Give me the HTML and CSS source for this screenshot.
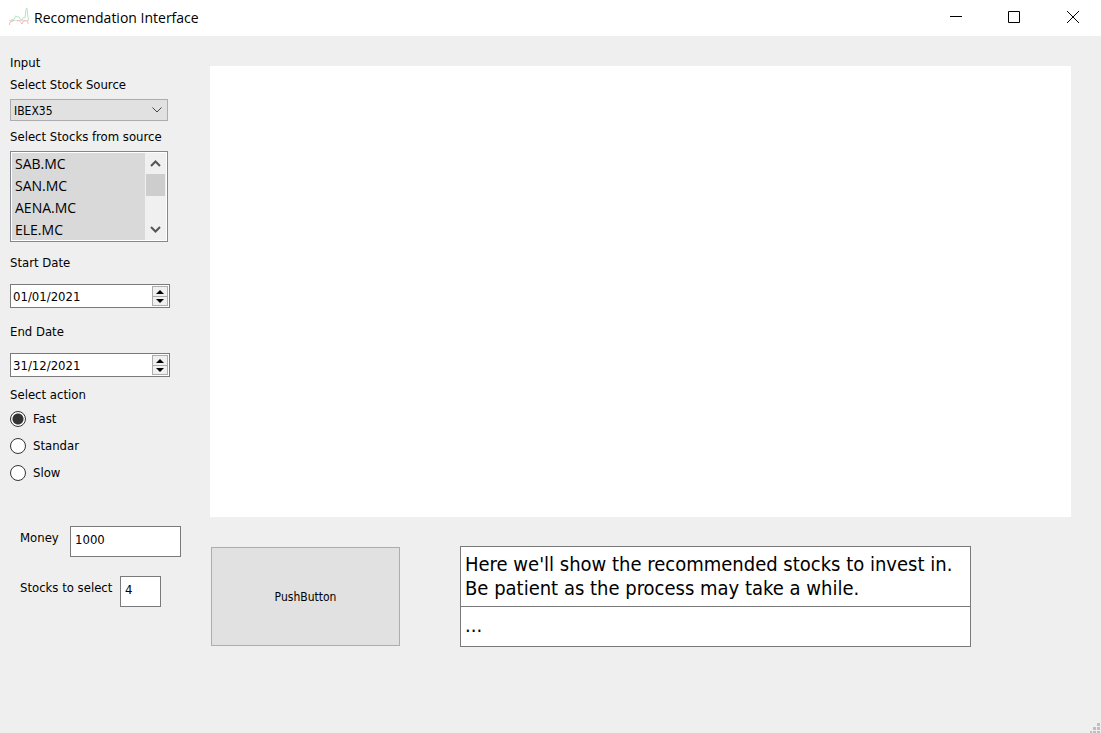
FILE: index.html
```html
<!DOCTYPE html>
<html lang="en">
<head>
<meta charset="utf-8">
<title>Recomendation Interface</title>
<link rel="stylesheet" href="styles.css">
</head>
<body>
<header class="titlebar">
  <svg class="app-icon" width="20" height="20" viewBox="0 0 20 20" fill="none">
    <path d="M0 12.500H20" stroke="#dedede"/>
    <path d="M2 12L5.500 11L6.500 8L8 9L9.500 8.500L11 11L13 12L14.500 9.500L16 10L17 1L18 0L18.500 6L19.500 12" stroke="#b4e6bd"/>
    <path d="M.5 17L1 14L3 13.500L5 12.500M8 13L10 12.500L12 14.500L13 16L14 13.500L17 12.500L19 14V16" stroke="#f7b9b9"/>
  </svg>
  <h1 class="title">Recomendation Interface</h1>
  <div class="window-buttons">
    <button class="window-button" type="button" aria-label="Minimize"><svg width="12" height="12" viewBox="0 0 12 12"><path d="M0 5.500H12" stroke="#000"/></svg></button>
    <button class="window-button" type="button" aria-label="Maximize"><svg width="12" height="12" viewBox="0 0 12 12"><path d="M.5.500H11.500V11.500H.5Z" fill="none" stroke="#000"/></svg></button>
    <button class="window-button" type="button" aria-label="Close"><svg width="14" height="12" viewBox="0 0 14 12"><path d="M2 0L14 12M14 0L2 12" stroke="#000"/></svg></button>
  </div>
</header>
<div class="content">
  <form class="sidebar">
    <h2 class="heading">Input</h2>
    <div class="field">
      <label for="source">Select Stock Source</label>
      <div class="combo">
        <select id="source" class="combo-select"><option>IBEX35</option></select>
        <svg class="combo-arrow" width="10" height="6" viewBox="0 0 10 6"><path d="M.5.500L5 5L9.500.500" fill="none" stroke="#444"/></svg>
      </div>
    </div>
    <div class="field">
      <label for="stocks">Select Stocks from source</label>
      <div class="list">
        <select id="stocks" class="list-select" multiple size="4">
          <option selected>SAB.MC</option>
          <option selected>SAN.MC</option>
          <option selected>AENA.MC</option>
          <option selected>ELE.MC</option>
        </select>
        <div class="scrollbar">
          <button class="scroll-button" type="button" aria-label="Scroll up"><svg width="11" height="7" viewBox="0 0 11 7"><path d="M1 6L5.500 1.500L10 6" fill="none" stroke="#555" stroke-width="2"/></svg></button>
          <div class="scroll-track"><div class="scroll-thumb"></div></div>
          <button class="scroll-button" type="button" aria-label="Scroll down"><svg width="11" height="7" viewBox="0 0 11 7"><path d="M1 1L5.500 5.500L10 1" fill="none" stroke="#555" stroke-width="2"/></svg></button>
        </div>
      </div>
    </div>
    <div class="field date-field">
      <label for="start">Start Date</label>
      <div class="date">
        <input id="start" class="date-input" type="text" value="01/01/2021">
        <div class="spinner">
          <button class="spin" type="button" aria-label="Later start"><svg width="8" height="4" viewBox="0 0 8 4"><path d="M0 4L4 0L8 4Z"/></svg></button>
          <button class="spin" type="button" aria-label="Earlier start"><svg width="8" height="4" viewBox="0 0 8 4"><path d="M0 0L4 4L8 0Z"/></svg></button>
        </div>
      </div>
    </div>
    <div class="field date-field">
      <label for="end">End Date</label>
      <div class="date">
        <input id="end" class="date-input" type="text" value="31/12/2021">
        <div class="spinner">
          <button class="spin" type="button" aria-label="Later end"><svg width="8" height="4" viewBox="0 0 8 4"><path d="M0 4L4 0L8 4Z"/></svg></button>
          <button class="spin" type="button" aria-label="Earlier end"><svg width="8" height="4" viewBox="0 0 8 4"><path d="M0 0L4 4L8 0Z"/></svg></button>
        </div>
      </div>
    </div>
    <fieldset class="actions">
      <legend class="legend">Select action</legend>
      <div class="radios">
        <label class="radio"><input class="radio-input" type="radio" name="action" checked>Fast</label>
        <label class="radio"><input class="radio-input" type="radio" name="action">Standar</label>
        <label class="radio"><input class="radio-input" type="radio" name="action">Slow</label>
      </div>
    </fieldset>
    <div class="amounts">
      <div class="amount">
        <label class="amount-label" for="money">Money</label>
        <textarea id="money" class="box money" rows="1">1000</textarea>
      </div>
      <div class="amount">
        <label class="amount-label" for="count">Stocks to select</label>
        <textarea id="count" class="box count" rows="1">4</textarea>
      </div>
    </div>
  </form>
  <main class="main">
    <div class="chart"></div>
    <div class="bottom">
      <button class="push" type="button">PushButton</button>
      <div class="results">
        <p class="message">Here we'll show the recommended stocks to invest in.<br>Be patient as the process may take a while.</p>
        <p class="message output">...</p>
      </div>
    </div>
  </main>
  <svg class="grip" width="10" height="10" viewBox="0 0 10 10" fill="#bfbfbf"><path d="M7 0h3v3h-3zM3 4h3v3h-3zM7 4h3v3h-3zM0 8h2v2h-2zM3 8h3v2h-3zM7 8h3v2h-3z"/></svg>
</div>
</body>
</html>
```

FILE: styles.css
```css
* {
  box-sizing: border-box;
}

body {
  margin: 0;
  min-height: 100vh;
  display: flex;
  flex-direction: column;
  background: #efefef;
  color: #000;
  font: 13px/18px "DejaVu Sans Condensed", "DejaVu Sans", sans-serif;
}

button,
input,
select,
textarea {
  font: inherit;
  color: inherit;
  margin: 0;
  border-radius: 0;
}

h1,
h2,
p {
  margin: 0;
  font-weight: normal;
}

svg {
  display: block;
}

.titlebar {
  height: 36px;
  flex: none;
  display: flex;
  align-items: center;
  background: #fff;
  padding-left: 9px;
}

.app-icon {
  margin-right: 5px;
}

.title {
  font: 14px/20px "Open Sans", sans-serif;
}

.window-buttons {
  display: flex;
  align-self: stretch;
  margin-left: auto;
}

.window-button {
  width: 58px;
  padding: 0 0 2px;
  border: 0;
  background: none;
  display: grid;
  place-items: center;
}

.content {
  position: relative;
  flex: 1;
  display: flex;
  padding: 0 30px 0 10px;
}

.sidebar {
  width: 171px;
  flex: none;
  padding-top: 18px;
  margin-right: 29px;
}

.heading {
  font-size: 13px;
}

.field {
  display: grid;
  grid-template-columns: minmax(0, 1fr);
  gap: 5px;
  margin-top: 4px;
  width: 158px;
}

.field + .field {
  margin-top: 7px;
}

.combo {
  position: relative;
}

.combo-select {
  display: block;
  appearance: none;
  width: 100%;
  height: 22px;
  padding: 1px 3px 0;
  border: 1px solid #adadad;
  background: #e1e1e1;
  font-size: 12px;
}

.combo-arrow {
  position: absolute;
  right: 6px;
  top: 8px;
  pointer-events: none;
}

.list {
  display: flex;
  height: 91px;
  padding: 1px;
  border: 1px solid #828790;
  background: #fff;
}

.list-select {
  flex: 1;
  min-width: 0;
  padding: 1px 0 0;
  border: 0;
  overflow: hidden;
  background: #d9d9d9;
  font: 14px/22px "Open Sans", sans-serif;
}

.list-select option {
  height: 22px;
  min-height: 22px;
  padding: 0 3px;
  color: #000;
  background: linear-gradient(#d9d9d9, #d9d9d9);
}

.scrollbar {
  width: 21px;
  display: flex;
  flex-direction: column;
  padding: 0 1px;
  background: #f0f0f0;
}

.scroll-button {
  height: 21px;
  padding: 0;
  border: 0;
  background: none;
  display: grid;
  place-items: center;
}

.scroll-track {
  flex: 1;
}

.scroll-thumb {
  height: 22px;
  background: #cdcdcd;
}

.field.date-field {
  width: 160px;
  gap: 12px;
  margin-top: 15px;
}

.field + .field.date-field:nth-of-type(3) {
  margin-top: 12px;
}

.date {
  display: flex;
  height: 24px;
  padding: 1px;
  border: 1px solid #7a7a7a;
  background: #fff;
}

.date-input {
  flex: 1;
  min-width: 0;
  padding: 2px 1px 0;
  border: 0;
  background: none;
}

.spinner {
  width: 16px;
  display: grid;
  grid-template-rows: 1fr 1fr;
  border: 1px solid #adadad;
  background: #f0f0f0;
}

.spin {
  padding: 0;
  border: 0;
  background: none;
  display: grid;
  place-items: center;
}

.spin + .spin {
  border-top: 1px solid #adadad;
}

.actions {
  margin: 9px 0 0;
  padding: 0;
  border: 0;
}

.legend {
  padding: 0;
}

.radios {
  display: grid;
  gap: 9px;
  padding-top: 6px;
}

.radio {
  display: flex;
  align-items: center;
  gap: 7px;
  line-height: 18px;
}

.radio-input {
  appearance: none;
  width: 16px;
  height: 16px;
  border: 1px solid #333;
  border-radius: 50%;
  background: #fff;
}

.radio-input:checked {
  background: radial-gradient(circle, #333 5px, #fff 6px);
}

.amounts {
  display: grid;
  gap: 19px;
  margin-top: 44px;
  padding-left: 10px;
}

.amount {
  display: flex;
  justify-content: space-between;
}

.amount-label {
  padding-top: 3px;
}

.box {
  height: 31px;
  padding: 4px;
  border: 1px solid #7a7a7a;
  background: #fff;
  resize: none;
  overflow: hidden;
}

.money {
  width: 111px;
}

.count {
  width: 41px;
  margin-right: 20px;
}

.main {
  flex: 1;
  min-width: 0;
  display: flex;
  flex-direction: column;
  padding: 30px 0 86px;
}

.chart {
  flex: 1;
  background: #fff;
}

.bottom {
  display: flex;
  gap: 60px;
  margin-top: 29px;
  padding: 0 100px 0 1px;
}

.push {
  width: 189px;
  margin: 1px 0;
  border: 1px solid #adadad;
  background: #e1e1e1;
  font-size: 12px;
}

.results {
  flex: 1;
  border: 1px solid #7a7a7a;
  background: #fff;
}

.message {
  padding: 5px 4px 6px;
  font-size: 20px;
  line-height: 24px;
}

.output {
  padding: 6px 4px 9px;
  border-top: 1px solid #7a7a7a;
}

.grip {
  position: absolute;
  right: 1px;
  bottom: 0;
}
```
